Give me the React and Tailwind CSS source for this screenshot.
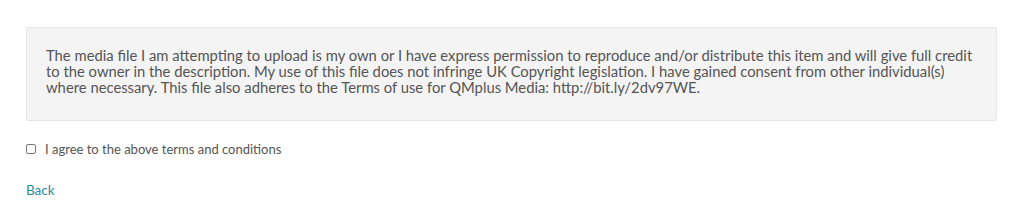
export default function App() {
  return (
    <div className="w-[1024px] h-[218px] bg-white font-['Lato','Liberation_Sans',sans-serif] text-[#555]">
      <div className="pt-[27px] px-[26px]">
        <div className="w-[971px] border border-[#e6e6e6] bg-[#f4f4f4] rounded-[2px] pl-[19px] pr-[20px] pt-[19px] pb-[25px] text-[14.8px] leading-[16px]">
          The media file I am attempting to upload is my own or I have express permission to reproduce and/or distribute this item and will give full credit to the owner in the description. My use of this file does not infringe UK Copyright legislation. I have gained consent from other individual(s) where necessary. This file also adheres to the Terms of use for QMplus Media: http://bit.ly/2dv97WE.
        </div>
        <label className="mt-[21px] flex items-center gap-[9px] text-[13px] leading-[14px]">
          <span className="w-[10px] h-[10px] border border-[#777] rounded-[2px] bg-white"></span>
          I agree to the above terms and conditions
        </label>
        <div className="mt-[26px] text-[13.5px] leading-[16px] text-[#2b8aa0]">Back</div>
      </div>
    </div>
  )
}
